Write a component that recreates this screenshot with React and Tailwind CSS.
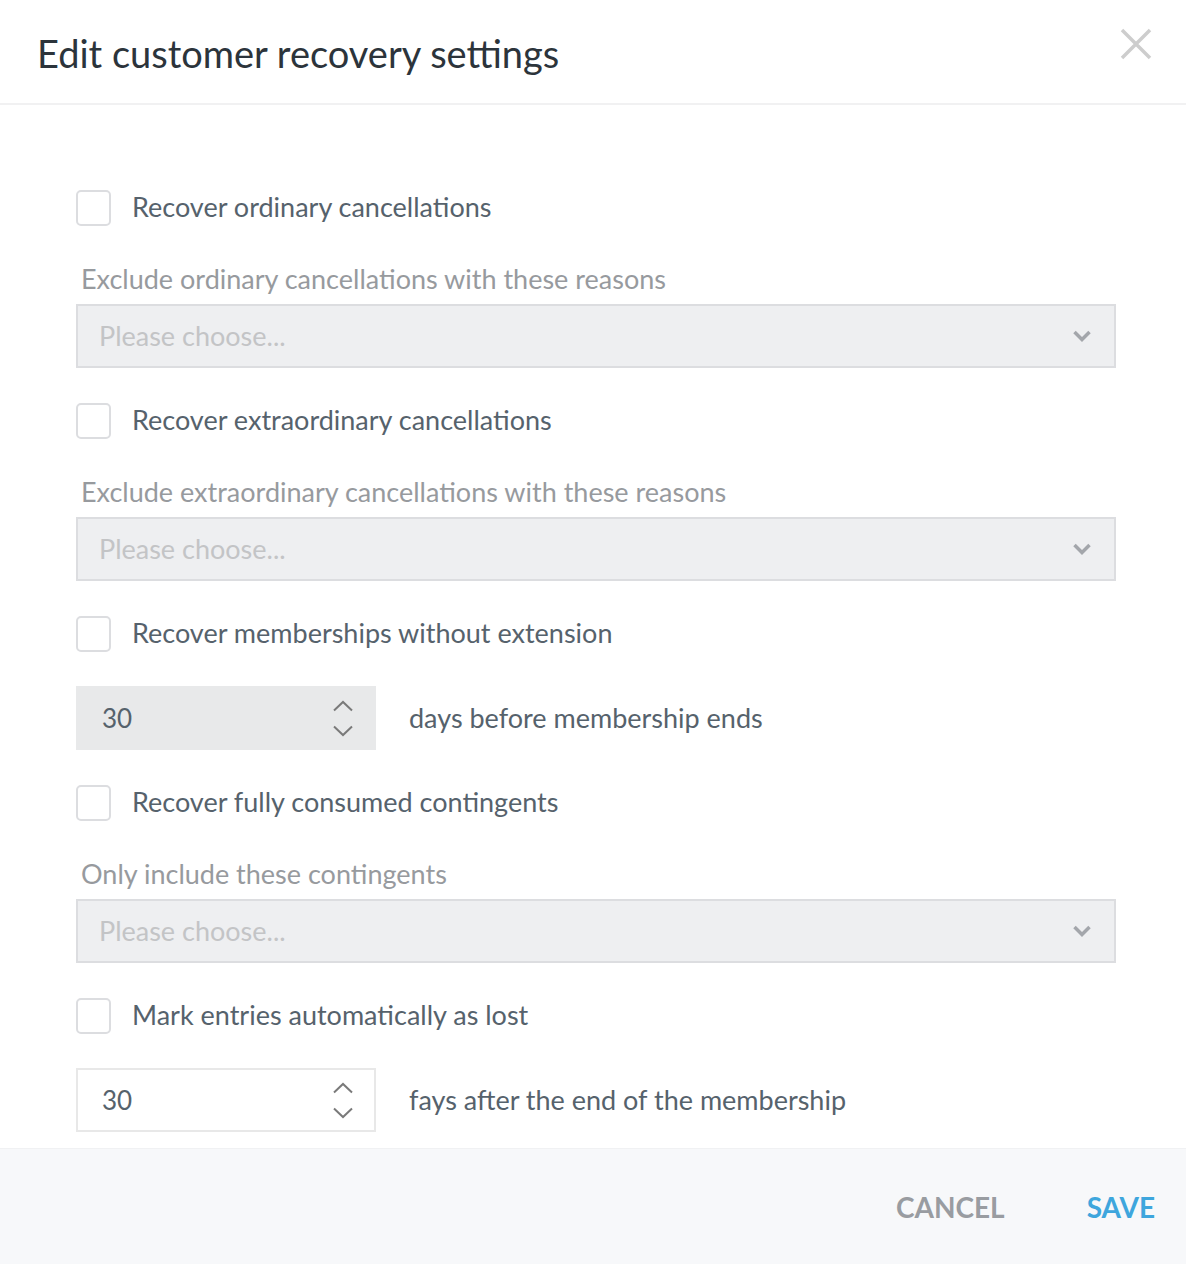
import React from 'react'

const font = { fontFamily: 'Lato, "Open Sans", sans-serif' }

function Checkbox({ label }){
  return (
    <div className="flex items-center h-9">
      <div className="w-[35px] h-[36px] rounded-[5px] border-2 border-[#dcdde0] bg-white shrink-0"></div>
      <span className="ml-[21px] mb-[4px] text-[27px] text-[#56626c] leading-none">{label}</span>
    </div>
  )
}

function Chevron(){
  return (
    <svg width="20" height="14" viewBox="0 0 20 14" fill="none">
      <path d="M2.5 3 L10 10.5 L17.5 3" stroke="#a3a6ab" strokeWidth="3.5" />
    </svg>
  )
}

function SelectBox({ label }){
  return (
    <div className="mr-[-6px]">
      <div className="mt-[38px] h-[30px] pl-[5px] flex items-center text-[27px] text-[#979a9e]">{label}</div>
      <div className="mt-[10px] h-16 border-2 border-[#dcdde0] bg-[#eeeff1] flex items-center justify-between pl-[21px] pr-[22px]">
        <span className="text-[27px] text-[#c3c4c6]">Please choose...</span>
        <Chevron />
      </div>
    </div>
  )
}

function Spinner(){
  return (
    <div className="flex flex-col items-center gap-[13px]">
      <svg width="22" height="12" viewBox="0 0 22 12" fill="none"><path d="M2 10.5 L11 2 L20 10.5" stroke="#7a7a7a" strokeWidth="2" /></svg>
      <svg width="22" height="12" viewBox="0 0 22 12" fill="none"><path d="M2 1.5 L11 10 L20 1.5" stroke="#7a7a7a" strokeWidth="2" /></svg>
    </div>
  )
}

function NumberRow({ filled, text }){
  return (
    <div className="mt-[34px] flex items-center">
      <div className={filled
        ? 'w-[300px] h-16 bg-[#e8e9ea] flex items-center justify-between pl-[26px] pr-[22px]'
        : 'w-[300px] h-16 bg-white border-2 border-[#e8e8e8] flex items-center justify-between pl-[24px] pr-[20px]'}>
        <span className="text-[26px] text-[#56626c]">30</span>
        <Spinner />
      </div>
      <span className="ml-[33px] text-[27px] text-[#56626c]">{text}</span>
    </div>
  )
}

export default function App(){
  return (
    <div className="w-[1186px] h-[1264px] bg-white flex flex-col overflow-hidden" style={font}>
      <div className="h-[105px] shrink-0 border-b-2 border-[#f1f1f2] flex items-center justify-between pl-[37px] pr-[33px]">
        <h1 className="text-[38px] text-[#2c343b] leading-none pt-[2px]">Edit customer recovery settings</h1>
        <svg width="34" height="34" viewBox="0 0 34 34" className="-mt-[16px]">
          <path d="M3 3 L31 31 M31 3 L3 31" stroke="#cdcdcd" strokeWidth="3.5" />
        </svg>
      </div>

      <div className="flex-1 pl-[76px] pr-[76px] pt-[85px]">
        <Checkbox label="Recover ordinary cancellations" />
        <SelectBox label="Exclude ordinary cancellations with these reasons" />
        <div className="mt-[35px]"><Checkbox label="Recover extraordinary cancellations" /></div>
        <SelectBox label="Exclude extraordinary cancellations with these reasons" />
        <div className="mt-[35px]"><Checkbox label="Recover memberships without extension" /></div>
        <NumberRow filled text="days before membership ends" />
        <div className="mt-[35px]"><Checkbox label="Recover fully consumed contingents" /></div>
        <SelectBox label="Only include these contingents" />
        <div className="mt-[35px]"><Checkbox label="Mark entries automatically as lost" /></div>
        <NumberRow text="fays after the end of the membership" />
      </div>

      <div className="h-[116px] shrink-0 bg-[#f7f8fa] border-t border-[#f0f1f3] flex items-center justify-end pr-[31px] gap-[82px]">
        <button className="text-[28px] font-bold text-[#999ca1] leading-none">CANCEL</button>
        <button className="text-[28px] font-bold text-[#3ea6dd] leading-none">SAVE</button>
      </div>
    </div>
  )
}
